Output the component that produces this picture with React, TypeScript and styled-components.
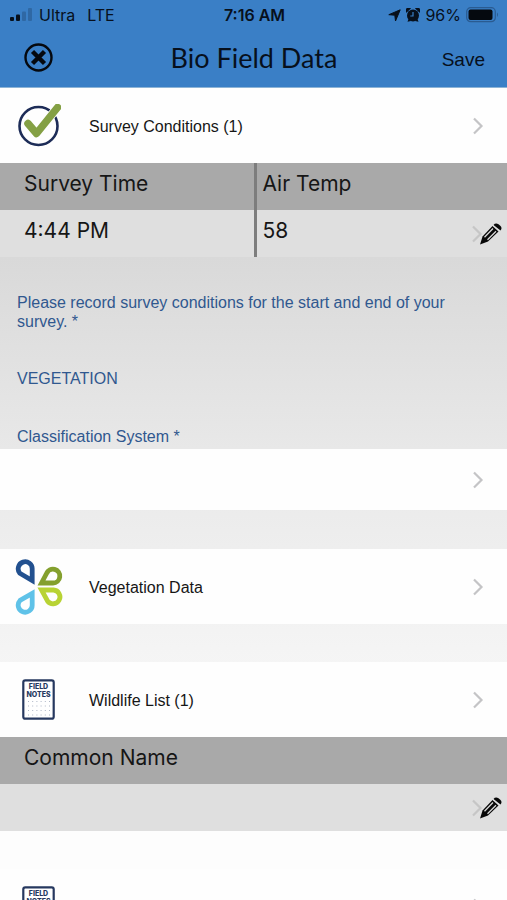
import React from "react";
import styled, { createGlobalStyle } from "styled-components";

const sans = '"Liberation Sans", Arial, sans-serif';
const system = 'Inter, "Liberation Sans", sans-serif';

const GlobalStyle = createGlobalStyle`
  *, *::before, *::after { box-sizing: border-box; }
  body { margin: 0; background: #fdfdfd; color: #161616; font-family: ${sans}; }
  button { margin: 0; padding: 0; border: 0; background: none; color: inherit; font: inherit; cursor: pointer; }
  svg { display: block; }
`;

const Screen = styled.div`
  display: flex;
  flex-direction: column;
  height: 100vh;
`;

const Header = styled.header`
  flex: none;
  background: #3a7fc6;
  border-bottom: 1px solid #8db4d6;
  color: #07101c;
`;

const StatusBar = styled.div`
  display: grid;
  grid-template-columns: 1fr auto 1fr;
  align-items: center;
  height: 30px;
  padding: 0 8px 0 10px;
  font: 400 16px/20px ${system};
`;

const StatusGroup = styled.div<{ $end?: boolean }>`
  display: flex;
  align-items: center;
  justify-content: ${(p) => (p.$end ? "flex-end" : "flex-start")};
  gap: ${(p) => (p.$end ? 5 : 6)}px;
  white-space: nowrap;
`;

const Network = styled.span`
  padding-left: 6px;
`;

const Clock = styled.time`
  font-weight: 600;
`;

const NavBar = styled.div`
  display: grid;
  grid-template-columns: 1fr auto 1fr;
  align-items: center;
  height: 57px;
  padding: 0 22px 2px 23px;
`;

const CloseButton = styled.button`
  justify-self: start;
`;

const SaveButton = styled.button`
  justify-self: end;
  padding-top: 4px;
  font-size: 19px;
  line-height: 24px;
`;

const Title = styled.h1`
  margin: 0;
  font: 400 27px/32px Lato, sans-serif;
`;

const Content = styled.main`
  flex: 1;
  min-height: 0;
  overflow-y: auto;
  scrollbar-width: none;
  background: linear-gradient(#cfcfcf 0, #d9d9d9 170px, #e8e8e8 360px, #f4f4f4 560px, #fdfdfd 740px);
`;

const Row = styled.button<{ $short?: boolean }>`
  display: flex;
  align-items: center;
  width: 100%;
  height: ${(p) => (p.$short ? 61 : 75)}px;
  padding: 0 23px 0 10px;
  background: #fefefe;
  font-size: 16px;
  line-height: 20px;
  text-align: left;
`;

const RowIcon = styled.span`
  display: flex;
  justify-content: center;
  width: 57px;
`;

const RowLabel = styled.span`
  flex: 1;
  padding: 2px 0 0 22px;
`;

const Gap = styled.div<{ $tall?: boolean }>`
  height: ${(p) => (p.$tall ? 39 : 38)}px;
`;

const DataTable = styled.table`
  width: 100%;
  table-layout: fixed;
  border-spacing: 0;
  font: 400 21px/26px ${system};
`;

const HeadCell = styled.th`
  height: 47px;
  padding: 8px 0 0 24px;
  background: #a9a9a9;
  font-weight: 400;
  text-align: left;
  vertical-align: top;
  & + & { padding-left: 6px; border-left: 3px solid #7d7d7d; }
`;

const Cell = styled.td`
  height: 47px;
  padding: 0 4px 0 24px;
  background: #dfdfdf;
  & + & { padding-left: 6px; border-left: 3px solid #7d7d7d; }
`;

const CellBody = styled.div`
  display: flex;
  justify-content: space-between;
  height: 47px;
  padding-top: 8px;
`;

const EditButton = styled.button`
  margin: 4px 0 0 auto;
  height: 24px;
`;

const Notes = styled.div`
  padding: 36px 17px 3px;
  color: #30588f;
  font-size: 16px;
  line-height: 19px;
`;

const Hint = styled.p`
  margin: 0 0 38px;
`;

const SectionTitle = styled.h2`
  margin: 0 0 39px;
  font-size: 16px;
  font-weight: 400;
`;

const FieldLabel = styled.div``;

const Chevron = () => (
  <svg width="12" height="18" viewBox="0 0 12 18" fill="none" stroke="#c4c4c6" strokeWidth="2.2" aria-hidden="true">
    <path d="M2 1.5 9.5 9 2 16.5" />
  </svg>
);

const EditIcon = () => (
  <svg width="32" height="24" viewBox="0 0 32 24" aria-hidden="true">
    <path d="M2 4.500 9.500 12 2 19.500" fill="none" stroke="#c6c6c6" strokeWidth="2.200" />
    <path d="M9 22.500 11.500 14.500 21.500 4 27.500 9.500 17 19.500Z" fill="#080808" />
    <path d="M22.500 3Q24.500 .5 27.500 2.200L29.500 4Q31.500 6 29.500 8.500Z" fill="#080808" />
    <path d="M13.500 15.200 22 6.500M16.500 17.800 25 9.300" stroke="#d8d8d8" strokeWidth="1.300" />
    <path d="M21.800 3.200 28.500 9.200" stroke="#dfdfdf" strokeWidth=".9" />
  </svg>
);

const CheckIcon = () => (
  <svg width="44" height="44" viewBox="0 0 44 44" fill="none" aria-hidden="true">
    <circle cx="21.500" cy="22" r="19" stroke="#1d2c57" strokeWidth="2.600" />
    <path d="M11 19.500 19.500 29.500 40.500 3.500" stroke="#fefefe" strokeWidth="9" />
    <path d="M11 19.500 19.500 29.500 40.500 3.500" stroke="#84a044" strokeWidth="7.500" strokeLinecap="round" strokeLinejoin="round" />
  </svg>
);

const PetalsIcon = () => (
  <svg width="50" height="56" viewBox="0 0 50 56" fill="none" strokeWidth="4.800" aria-hidden="true">
    <path d="M18.200 21.500V10A7 7 0 1 0 5.800 14.200Z" stroke="#22508f" />
    <path d="M27.500 24 32.500 14.500A6.900 6.900 0 1 1 39 24Z" stroke="#84a02e" />
    <path d="M27.500 31H39.500A6.900 6.900 0 1 1 33.500 42Z" stroke="#b8d334" />
    <path d="M18.200 34.500V46A7 7 0 1 1 6 41.500Z" stroke="#5fc2e8" />
  </svg>
);

const NotesIcon = () => (
  <svg width="33" height="41" viewBox="0 0 33 41" aria-hidden="true">
    <rect x="1.300" y="1.300" width="30.400" height="38.400" rx="2" fill="#fff" stroke="#26385f" strokeWidth="2.200" />
    <g fill="#26385f" fontFamily="Inter, sans-serif" fontWeight="800" textAnchor="middle">
      <text x="16.500" y="10" fontSize="7">FIELD</text>
      <text x="16.500" y="17.500" fontSize="7">NOTES</text>
    </g>
    <path d="M6 22.500H28M6 27H28M6 31.500H28M6 36H28" stroke="#aeb6c6" strokeWidth="1" strokeDasharray="1 3.200" />
  </svg>
);

const CloseIcon = () => (
  <svg width="30" height="30" viewBox="0 0 30 30" fill="none" stroke="#05090f" aria-hidden="true">
    <circle cx="15.500" cy="14.500" r="13" strokeWidth="2.400" />
    <path d="m9.500 8.500 12 12M21.500 8.500 9.500 20.500" strokeWidth="4.400" />
  </svg>
);

const SignalIcon = () => (
  <svg width="23" height="14" viewBox="0 0 23 14" fill="#07101c" aria-hidden="true">
    <rect x="0" y="9" width="4" height="4" rx="1" />
    <rect x="6" y="6.500" width="4" height="6.500" rx="1" />
    <rect x="12" y="3.500" width="4" height="9.500" rx="1" opacity=".2" />
    <rect x="18" y="0" width="4" height="13" rx="1" opacity=".2" />
  </svg>
);

const LocationIcon = () => (
  <svg width="13" height="13" viewBox="0 0 13 13" fill="#07101c" stroke="#07101c" strokeLinejoin="round" aria-hidden="true">
    <path d="M12.200.8 7.500 12 6.800 6.200.8 5.700Z" />
  </svg>
);

const AlarmIcon = () => (
  <svg width="14" height="14" viewBox="0 0 14 14" fill="#07101c" aria-hidden="true">
    <circle cx="7" cy="7.500" r="6" />
    <path d="M.3 4.800A3 3 0 0 1 5 .6ZM13.700 4.800A3 3 0 0 0 9 .6ZM1.500 13.800 2.500 11 5 13ZM12.500 13.800 11.500 11 9 13Z" />
    <path d="M7 4V8H4.300" fill="none" stroke="#3a7fc6" strokeWidth="1.200" />
  </svg>
);

const BatteryIcon = () => (
  <svg width="33" height="16" viewBox="0 0 33 16" fill="#05090f" aria-hidden="true">
    <rect x=".7" y=".7" width="28.600" height="14" rx="4" fill="none" stroke="#2a5b91" strokeWidth="1.200" />
    <rect x="2.500" y="2.500" width="24" height="10.400" rx="2" />
    <path d="M31 5.500Q33 7.700 31 10Z" fill="#2a5b91" />
  </svg>
);

type LinkRowProps = { icon: React.ReactNode; label?: string };

const LinkRow = ({ icon, label }: LinkRowProps) => (
  <Row type="button" aria-label={label ?? "Field notes"}>
    <RowIcon>{icon}</RowIcon>
    <RowLabel>{label}</RowLabel>
    <Chevron />
  </Row>
);

type RecordTableProps = { columns: string[]; values: string[] };

const RecordTable = ({ columns, values }: RecordTableProps) => (
  <DataTable>
    <thead>
      <tr>
        {columns.map((column) => (
          <HeadCell key={column} scope="col">{column}</HeadCell>
        ))}
      </tr>
    </thead>
    <tbody>
      <tr>
        {values.map((value, i) => (
          <Cell key={columns[i]}>
            <CellBody>
              {value}
              {i === values.length - 1 && (
                <EditButton type="button" aria-label="Edit record">
                  <EditIcon />
                </EditButton>
              )}
            </CellBody>
          </Cell>
        ))}
      </tr>
    </tbody>
  </DataTable>
);

export default function App() {
  return (
    <Screen>
      <GlobalStyle />
      <Header>
        <StatusBar>
          <StatusGroup>
            <SignalIcon />
            <span>Ultra</span>
            <Network>LTE</Network>
          </StatusGroup>
          <Clock>7:16 AM</Clock>
          <StatusGroup $end>
            <LocationIcon />
            <AlarmIcon />
            <span>96%</span>
            <BatteryIcon />
          </StatusGroup>
        </StatusBar>
        <NavBar>
          <CloseButton type="button" aria-label="Close">
            <CloseIcon />
          </CloseButton>
          <Title>Bio Field Data</Title>
          <SaveButton type="button">Save</SaveButton>
        </NavBar>
      </Header>
      <Content>
        <LinkRow icon={<CheckIcon />} label="Survey Conditions (1)" />
        <RecordTable columns={["Survey Time", "Air Temp"]} values={["4:44 PM", "58"]} />
        <Notes>
          <Hint>Please record survey conditions for the start and end of your survey. *</Hint>
          <SectionTitle>VEGETATION</SectionTitle>
          <FieldLabel id="classification">Classification System *</FieldLabel>
        </Notes>
        <Row type="button" $short aria-labelledby="classification">
          <RowLabel />
          <Chevron />
        </Row>
        <Gap $tall />
        <LinkRow icon={<PetalsIcon />} label="Vegetation Data" />
        <Gap />
        <LinkRow icon={<NotesIcon />} label="Wildlife List (1)" />
        <RecordTable columns={["Common Name"]} values={[""]} />
        <Gap />
        <LinkRow icon={<NotesIcon />} />
      </Content>
    </Screen>
  );
}
